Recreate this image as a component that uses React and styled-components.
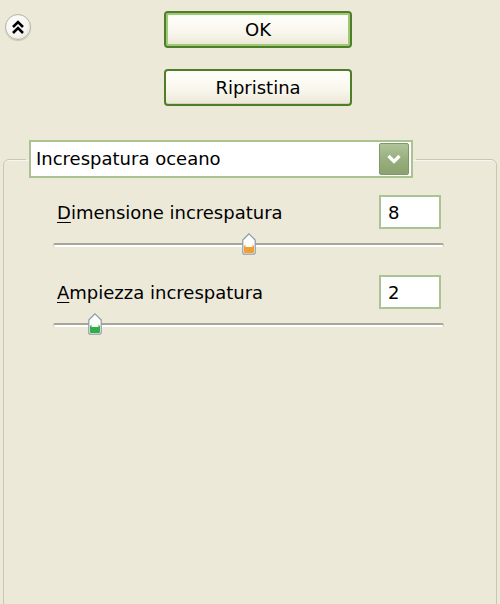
import React from "react";
import styled, { createGlobalStyle } from "styled-components";

const Global = createGlobalStyle`
  html, body {
    margin: 0;
    padding: 0;
    background: #ECE9D8;
    width: 500px;
    height: 604px;
    overflow: hidden;
    font-family: "DejaVu Sans", Verdana, sans-serif;
    font-size: 18px;
    color: #000;
  }
`;

const Page = styled.div`
  width: 500px;
  height: 604px;
  display: flex;
  flex-direction: column;
  overflow: hidden;
`;

const Header = styled.div`
  display: flex;
  align-items: flex-start;
`;

const CollapseButton = styled.button`
  margin: 14px 0 0 5px;
  width: 26px;
  height: 26px;
  padding: 0;
  border-radius: 50%;
  border: 1px solid #b7b5a8;
  background: radial-gradient(circle at 40% 35%, #ffffff 0%, #f6f5f0 55%, #d9d7cc 100%);
  box-shadow: 0 1px 1px rgba(0,0,0,0.15);
  display: flex;
  align-items: center;
  justify-content: center;
`;

const ButtonColumn = styled.div`
  margin-left: 133px;
  padding-top: 11px;
  display: flex;
  flex-direction: column;
  gap: 21px;
`;

const PushButton = styled.button`
  width: 188px;
  height: 37px;
  box-sizing: border-box;
  border-radius: 4px;
  border: 2px solid #4f7d2a;
  background: linear-gradient(#fffffb 0%, #f8f6ec 60%, #ebe7d6 100%);
  box-shadow: ${(p) => (p.$default ? "inset 0 0 0 2px #9fca74" : "inset 0 -1px 0 #d8d3bf")};
  font-family: "DejaVu Sans", Verdana, sans-serif;
  font-size: 18px;
  color: #000;
  padding: 0;
`;

const Group = styled.fieldset`
  margin: 34px 3px -20px 3px;
  padding: 0;
  min-width: 0;
  border: 1px solid #c9c6b4;
  border-radius: 6px;
  box-shadow: inset 0 1px 0 #f7f6f0;
  flex: 1 1 auto;
`;

const Legend = styled.legend`
  margin-left: 22px;
  padding: 0 3px;
`;

const GroupBody = styled.div`
  display: flex;
  flex-direction: column;
  padding: 0 52px 0 49px;
`;

const Combo = styled.div`
  width: 384px;
  height: 38px;
  box-sizing: border-box;
  border: 2px solid #a9c393;
  background: #fff;
  display: flex;
  align-items: center;
  justify-content: space-between;
  padding: 0 2px 0 5px;
`;

const ComboText = styled.span`
  line-height: 1;
`;

const DropButton = styled.div`
  width: 30px;
  height: 32px;
  box-sizing: border-box;
  border: 1px solid #7f9867;
  border-radius: 2px;
  background: linear-gradient(#b0c49a 0%, #98b07e 50%, #89a26f 100%);
  display: flex;
  align-items: center;
  justify-content: center;
`;

const Setting = styled.div`
  display: flex;
  flex-direction: column;
  margin-top: ${(p) => p.$top}px;
`;

const Row = styled.div`
  display: flex;
  align-items: center;
  height: 34px;
  padding-left: 4px;
  margin-right: 3px;
`;

const Label = styled.span`
  flex: 1;
  line-height: 1;
  padding-top: 2px;
`;

const Key = styled.span`
  text-decoration: underline;
  text-underline-offset: 3px;
`;

const NumberBox = styled.div`
  width: 62px;
  height: 34px;
  box-sizing: border-box;
  border: 2px solid #a9c393;
  background: #fff;
  display: flex;
  align-items: center;
  padding-left: 7px;
`;

const Slider = styled.div`
  position: relative;
  height: 26px;
  margin-top: 3px;
  display: flex;
  align-items: center;
`;

const Track = styled.div`
  width: 100%;
  height: 4px;
  box-sizing: border-box;
  border-radius: 3px;
  background: #fff;
  border-top: 2px solid #a8a69a;
  border-left: 1px solid #c3c1b3;
  border-right: 1px solid #c3c1b3;
`;

const Thumb = styled.div`
  position: absolute;
  top: 1px;
  width: 14px;
  height: 22px;
  margin-left: -7px;
`;

function ThumbIcon({ color }) {
  return (
    <svg width="14" height="22" viewBox="0 0 14 22">
      <path d="M7 0.8 L13.2 7 L13.2 19.5 Q13.2 21.2 11.5 21.2 L2.5 21.2 Q0.8 21.2 0.8 19.5 L0.8 7 Z" fill="#ffffff" stroke="#8d9aa4" strokeWidth="1.2" />
      <path d="M2 13 L7 9 L12 13 L12 19 Q12 20 11 20 L3 20 Q2 20 2 19 Z" fill={color} />
      <path d="M7 3.2 L10.5 7 L10.5 14 L3.5 14 L3.5 7 Z" fill="#fdfdfa" />
    </svg>
  );
}

function SliderControl({ pos, color }) {
  return (
    <Slider>
      <Track />
      <Thumb style={{ left: `${pos}px` }}>
        <ThumbIcon color={color} />
      </Thumb>
    </Slider>
  );
}

export default function App() {
  return (
    <Page>
      <Global />
      <Header>
        <CollapseButton aria-label="Comprimi">
          <svg width="14" height="16" viewBox="0 0 14 16">
            <path d="M2 8 L7 3 L12 8" fill="none" stroke="#000" strokeWidth="2.6" />
            <path d="M2 14 L7 9 L12 14" fill="none" stroke="#000" strokeWidth="2.6" />
          </svg>
        </CollapseButton>
        <ButtonColumn>
          <PushButton $default>OK</PushButton>
          <PushButton>Ripristina</PushButton>
        </ButtonColumn>
      </Header>
      <Group>
        <Legend>
          <Combo>
            <ComboText>Increspatura oceano</ComboText>
            <DropButton>
              <svg width="16" height="12" viewBox="0 0 16 12">
                <path d="M2.5 3 L8 8.5 L13.5 3" fill="none" stroke="#fff" strokeWidth="3.2" />
              </svg>
            </DropButton>
          </Combo>
        </Legend>
        <GroupBody>
          <Setting $top={17}>
            <Row>
              <Label><Key>D</Key>imensione increspatura</Label>
              <NumberBox>8</NumberBox>
            </Row>
            <SliderControl pos={196} color="#f0a030" />
          </Setting>
          <Setting $top={17}>
            <Row>
              <Label><Key>A</Key>mpiezza increspatura</Label>
              <NumberBox>2</NumberBox>
            </Row>
            <SliderControl pos={42} color="#2fae4a" />
          </Setting>
        </GroupBody>
      </Group>
    </Page>
  );
}
